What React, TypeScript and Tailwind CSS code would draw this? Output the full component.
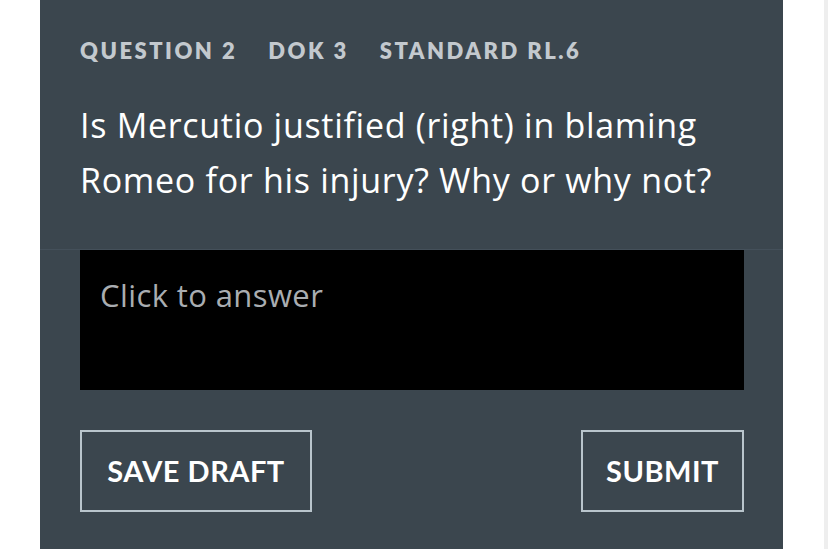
import React from "react";

export default function App() {
  return (
    <div className="w-[828px] h-[549px] bg-white flex overflow-hidden" style={{ fontFamily: "Lato, 'Open Sans', sans-serif" }}>
      <div className="ml-[40px] w-[743px] h-full bg-[#3b464e] flex flex-col">
        <div className="px-[40px] pt-[37px] h-[250px] border-b border-[#44505a]">
          <div className="flex items-center gap-[31px] text-[22px] leading-[28px] font-extrabold tracking-[2.5px] text-[#c3c9ce]">
            <span>QUESTION 2</span>
            <span>DOK 3</span>
            <span>STANDARD RL.6</span>
          </div>
          <p className="mt-[33px] text-[34px] leading-[55px] tracking-[0.7px] text-white font-['Open_Sans',sans-serif]">
            Is Mercutio justified (right) in blaming
            <br />
            Romeo for his injury? Why or why not?
          </p>
        </div>
        <div className="pl-[40px] pr-[39px]">
          <div className="h-[140px] bg-black pl-[20px] pt-[25px]">
            <span className="text-[31px] leading-[40px] tracking-[0.4px] text-[#a9adb1] font-['Open_Sans',sans-serif]">Click to answer</span>
          </div>
          <div className="mt-[40px] flex justify-between">
            <button className="h-[82px] w-[232px] border-2 border-[#b9c5cc] text-white text-[29px] tracking-[0.5px] font-bold">SAVE DRAFT</button>
            <button className="h-[82px] w-[163px] border-2 border-[#b9c5cc] text-white text-[29px] tracking-[0.5px] font-bold">SUBMIT</button>
          </div>
        </div>
      </div>
      <div className="flex-1" />
      <div className="w-[4px] h-full bg-[#eeeeee]" />
    </div>
  );
}
